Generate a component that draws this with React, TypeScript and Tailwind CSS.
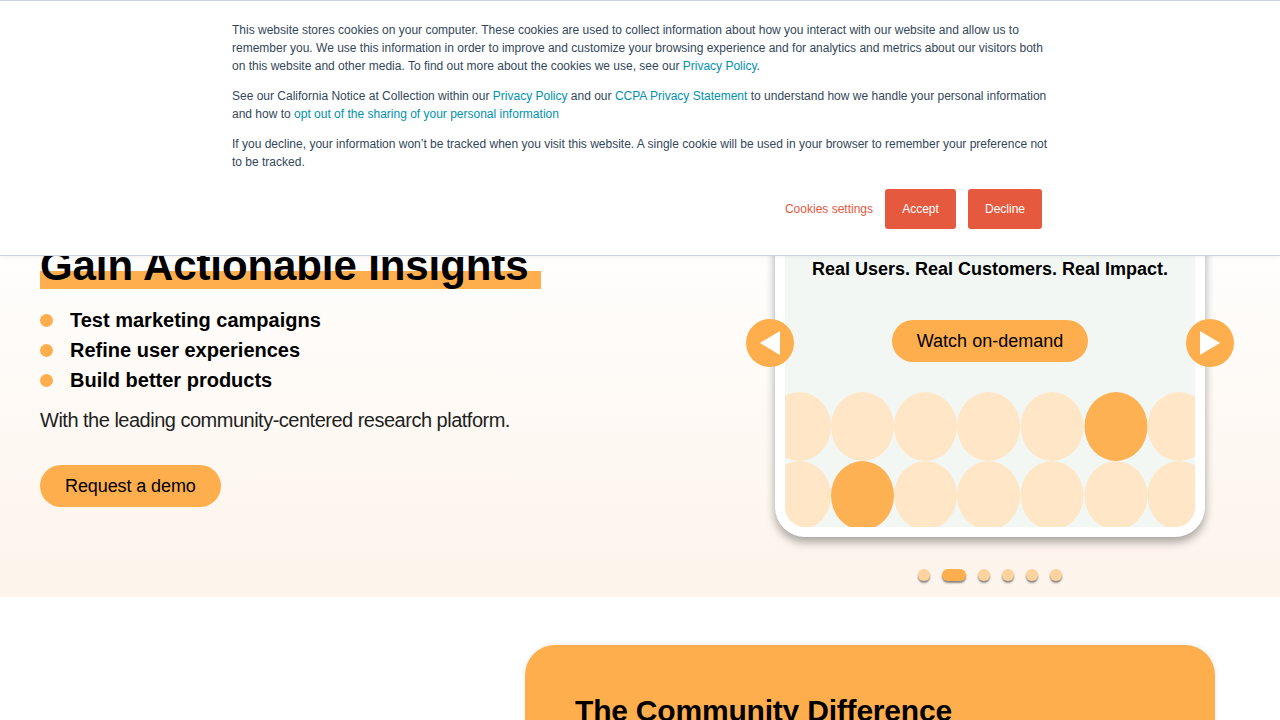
import React from "react";

const circleXs = [14.5, 77.5, 140.5, 203.5, 267, 331, 394];

function Circles() {
  return (
    <svg width="410" height="135" viewBox="0 0 410 135" className="block">
      {circleXs.map((cx, i) => (
        <ellipse key={"a" + i} cx={cx} cy={34.5} rx={31.5} ry={34.5} fill={i === 5 ? "#fdb153" : "#fee6c6"} />
      ))}
      {circleXs.map((cx, i) => (
        <ellipse key={"b" + i} cx={cx} cy={103.5} rx={31.5} ry={34.5} fill={i === 1 ? "#fdb153" : "#fee6c6"} />
      ))}
    </svg>
  );
}

function Arrow({ dir }: { dir: "left" | "right" }) {
  return (
    <div className="w-12 h-12 rounded-full bg-[#ffae4d] flex items-center justify-center">
      <svg width="24" height="26" viewBox="0 0 24 26">
        {dir === "left" ? (
          <polygon points="2,13 22,1 22,25" fill="#fff" />
        ) : (
          <polygon points="22,13 2,1 2,25" fill="#fff" />
        )}
      </svg>
    </div>
  );
}

export default function App() {
  const font = { fontFamily: '"Liberation Sans", Arial, Helvetica, sans-serif' };
  return (
    <div className="relative w-full bg-white" style={font}>
      {/* Hero */}
      <section className="h-[597px] bg-[linear-gradient(to_bottom,#ffffff_0%,#ffffff_35%,#fdf4eb_100%)] flex">
        <div className="flex-1 pl-[40px] pt-[242px]">
          <h1 className="text-[42px] leading-[47px] font-bold text-black tracking-[-0.1px]">
            <span className="inline-block pr-[13px] bg-[linear-gradient(to_bottom,transparent_29px,#ffae4d_29px)]">
              Gain Actionable Insights
            </span>
          </h1>
          <ul className="mt-4">
            {["Test marketing campaigns", "Refine user experiences", "Build better products"].map((t) => (
              <li key={t} className="flex items-center h-[30px]">
                <span className="w-[13px] h-[13px] rounded-full bg-[#ffae4d] mr-[17px]" />
                <span className="text-[20px] font-bold text-black leading-[30px]">{t}</span>
              </li>
            ))}
          </ul>
          <p className="mt-[10px] text-[20px] leading-[30px] text-[#1f1f1f] font-light tracking-[-0.5px]">
            With the leading community-centered research platform.
          </p>
          <button className="mt-[30px] h-[42px] px-[25px] rounded-full bg-[#ffae4d] text-[18px] text-black tracking-[-0.1px]">
            Request a demo
          </button>
        </div>
        <div className="w-[430px] mr-[75px] pt-[205px] flex flex-col items-center">
          <div className="relative w-[430px] rounded-[30px] bg-white p-[10px] shadow-[0_5px_10px_rgba(0,0,0,0.35)]">
            <div className="rounded-[20px] bg-[#f3f7f4] overflow-hidden flex flex-col items-center pt-[42px]">
              <div className="text-[18px] leading-[24px] font-bold text-black">
                Real Users. Real Customers. Real Impact.
              </div>
              <button className="mt-[39px] h-[42px] px-[25px] rounded-full bg-[#ffae4d] text-[18px] text-black">
                Watch on-demand
              </button>
              <div className="mt-[30px] h-[135px] overflow-hidden">
                <Circles />
              </div>
            </div>
            <div className="absolute left-[-29px] top-[114px]">
              <Arrow dir="left" />
            </div>
            <div className="absolute right-[-29px] top-[114px]">
              <Arrow dir="right" />
            </div>
          </div>
          <div className="mt-[32px] flex items-center gap-3">
            <span className="w-3 h-3 rounded-full bg-[#ffd39e] shadow-[0_2px_2px_rgba(0,0,0,0.45)]" />
            <span className="w-6 h-3 rounded-full bg-[#ffae4d] shadow-[0_2px_2px_rgba(0,0,0,0.45)]" />
            <span className="w-3 h-3 rounded-full bg-[#ffd39e] shadow-[0_2px_2px_rgba(0,0,0,0.45)]" />
            <span className="w-3 h-3 rounded-full bg-[#ffd39e] shadow-[0_2px_2px_rgba(0,0,0,0.45)]" />
            <span className="w-3 h-3 rounded-full bg-[#ffd39e] shadow-[0_2px_2px_rgba(0,0,0,0.45)]" />
            <span className="w-3 h-3 rounded-full bg-[#ffd39e] shadow-[0_2px_2px_rgba(0,0,0,0.45)]" />
          </div>
        </div>
      </section>

      {/* Community section */}
      <section className="bg-white pt-[48px] flex justify-end pr-[65px]">
        <div className="w-[690px] h-[200px] rounded-t-[30px] bg-[#ffae4d] pl-[50px] pt-[48px] shadow-[0_0_6px_rgba(0,0,0,0.08)]">
          <h2 className="text-[30px] leading-[36px] font-bold text-black tracking-[-0.2px]">The Community Difference</h2>
        </div>
      </section>

      {/* Cookie banner overlay */}
      <div className="absolute top-0 left-0 right-0 h-[256px] bg-white border-t border-b border-[#cbd6e2] shadow-[0_1px_4px_rgba(0,0,0,0.06)]">
        <div className="w-[816px] mx-auto pt-[20px] text-[12px] leading-[18px] text-[#33475b]">
          <p>
            This website stores cookies on your computer. These cookies are used to collect information about how you interact with our website and allow us to remember you. We use this information in order to improve and customize your browsing experience and for analytics and metrics about our visitors both on this website and other media. To find out more about the cookies we use, see our{" "}
            <a className="text-[#0091ae]">Privacy Policy</a>.
          </p>
          <p className="mt-3">
            See our California Notice at Collection within our <a className="text-[#0091ae]">Privacy Policy</a> and our{" "}
            <a className="text-[#0091ae]">CCPA Privacy Statement</a> to understand how we handle your personal information and how to{" "}
            <a className="text-[#0091ae]">opt out of the sharing of your personal information</a>
          </p>
          <p className="mt-3">
            If you decline, your information won’t be tracked when you visit this website. A single cookie will be used in your browser to remember your preference not to be tracked.
          </p>
          <div className="mt-[18px] flex justify-end items-center gap-3 pr-[6px]">
            <span className="text-[#e5593f]">Cookies settings</span>
            <button className="h-10 w-[71px] rounded-[3px] bg-[#e5593f] text-white text-[12px]">Accept</button>
            <button className="h-10 w-[74px] rounded-[3px] bg-[#e5593f] text-white text-[12px]">Decline</button>
          </div>
        </div>
      </div>
    </div>
  );
}
